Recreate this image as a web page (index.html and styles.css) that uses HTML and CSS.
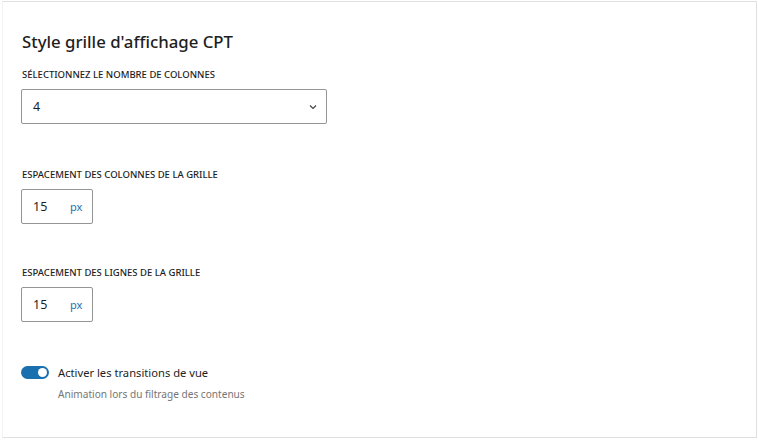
FILE: index.html
```html
<!DOCTYPE html>
<html lang="fr">
<head>
    <meta charset="UTF-8">
    <title>Style grille d'affichage CPT</title>
    <link rel="stylesheet" href="styles.css">
</head>
<body>
    <div class="panel">
        <h2 class="panel-title">Style grille d'affichage CPT</h2>

        <div class="field">
            <label class="field-label" for="columns">Sélectionnez le nombre de colonnes</label>
            <div class="select-box" id="columns">
                <span>4</span>
                <svg class="chevron" width="10" height="6" viewBox="0 0 10 6">
                    <path d="M2 1.5 L5 4.5 L8 1.5" fill="none" stroke="#444" stroke-width="1.2"/>
                </svg>
            </div>
        </div>

        <div class="field field-spaced">
            <label class="field-label">Espacement des colonnes de la grille</label>
            <div class="unit-input">
                <span class="unit-value">15</span>
                <span class="unit">px</span>
            </div>
        </div>

        <div class="field field-spaced field-tight">
            <label class="field-label">Espacement des lignes de la grille</label>
            <div class="unit-input">
                <span class="unit-value">15</span>
                <span class="unit">px</span>
            </div>
        </div>

        <div class="toggle-row">
            <span class="toggle"><span class="knob"></span></span>
            <div>
                <div class="toggle-label">Activer les transitions de vue</div>
                <div class="toggle-help">Animation lors du filtrage des contenus</div>
            </div>
        </div>
    </div>
</body>
</html>
```

FILE: styles.css
```css
body {
    margin: 0;
    font-family: "Noto Sans", "Open Sans", sans-serif;
    color: #1e1e1e;
    background: #fff;
}

.panel {
    box-sizing: border-box;
    width: 755px;
    height: 437px;
    margin: 1px 0 0 2px;
    border: 1px solid #e0e0e0;
    border-left-color: #f3f3f3;
    padding: 28px 18px 0;
}

.panel-title {
    margin: 0 0 14px;
    padding-left: 1px;
    font-size: 16.8px;
    font-weight: 500;
    line-height: 24px;
}

.field-label {
    display: block;
    padding-left: 1px;
    font-size: 9.5px;
    font-weight: 500;
    text-transform: uppercase;
    line-height: 13px;
    margin-bottom: 8px;
}

.field-spaced {
    margin-top: 44px;
}

.field-tight {
    margin-top: 42px;
}

.select-box {
    box-sizing: border-box;
    width: 306px;
    height: 35px;
    border: 1px solid #949494;
    border-radius: 2px;
    display: flex;
    align-items: center;
    justify-content: space-between;
    padding: 0 8px 0 11px;
    font-size: 12.5px;
}

.unit-input {
    box-sizing: border-box;
    width: 72px;
    height: 35px;
    border: 1px solid #949494;
    border-radius: 2px;
    display: flex;
    align-items: center;
    padding-left: 11px;
    font-size: 12.5px;
}

.unit-value {
    width: 37px;
}

.unit {
    color: #2271b1;
    font-size: 11px;
}

.toggle-row {
    display: flex;
    align-items: flex-start;
    gap: 9px;
    margin-top: 43px;
}

.toggle {
    box-sizing: border-box;
    width: 28px;
    height: 13px;
    border-radius: 7px;
    background: #1a6fae;
    display: flex;
    align-items: center;
    justify-content: flex-end;
    padding-right: 2px;
    margin-top: 1px;
}

.knob {
    width: 9px;
    height: 9px;
    border-radius: 50%;
    background: #fff;
}

.toggle-label {
    font-size: 11.2px;
    line-height: 15px;
}

.toggle-help {
    margin-top: 8px;
    font-size: 10.1px;
    line-height: 13px;
    color: #757575;
}
```
